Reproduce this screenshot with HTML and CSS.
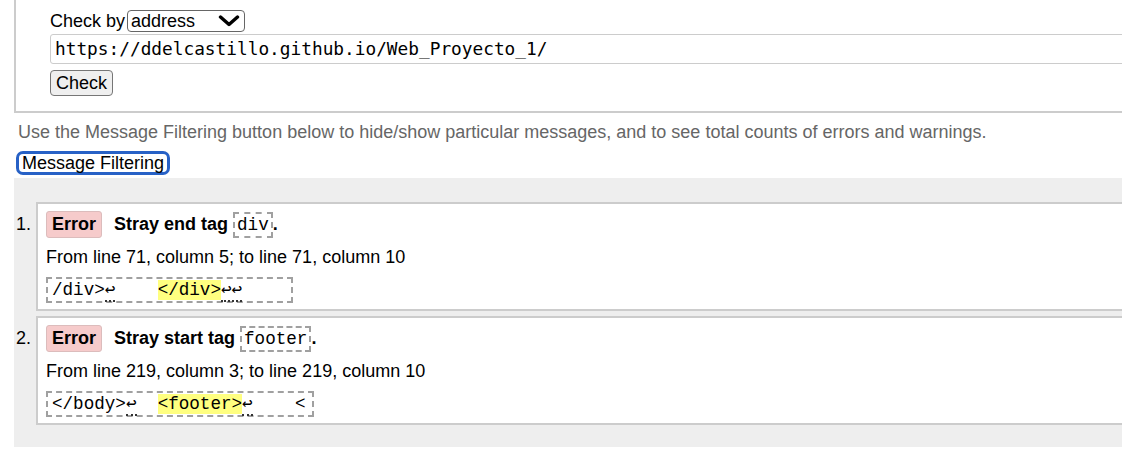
FILE: index.html
```html
<!DOCTYPE html>
<html lang="en">
<head>
<meta charset="utf-8">
<title>Nu Html Checker</title>
<link rel="stylesheet" href="styles.css">
</head>
<body>
<div class="page">
  <div class="form">
    <div class="row">
      <span class="label">Check by</span>
      <span class="select">address
        <svg class="chev" width="22" height="12" viewBox="0 0 22 12"><polyline points="2.5,2 11,9.5 19.5,2" fill="none" stroke="#000" stroke-width="3.4" stroke-linecap="round" stroke-linejoin="round"/></svg>
      </span>
    </div>
    <div class="url">https://ddelcastillo.github.io/Web_Proyecto_1/</div>
    <div class="btnrow"><button class="btn">Check</button></div>
  </div>
  <p class="hint">Use the Message Filtering button below to hide/show particular messages, and to see total counts of errors and warnings.</p>
  <div class="filterrow"><button class="filter">Message Filtering</button></div>
  <div class="results">
    <ol class="msgs">
      <li class="msg">
        <p class="head"><span class="badge">Error</span><strong>Stray end tag <code class="tag">div</code>.</strong></p>
        <p class="loc">From line 71, column 5; to line 71, column 10</p>
        <p class="ext"><code class="extract">/div&gt;<span class="lf">↩</span>    <b class="hl">&lt;/div&gt;</b><span class="lf">↩↩</span>    </code></p>
      </li>
      <li class="msg">
        <p class="head"><span class="badge">Error</span><strong>Stray start tag <code class="tag">footer</code>.</strong></p>
        <p class="loc">From line 219, column 3; to line 219, column 10</p>
        <p class="ext"><code class="extract">&lt;/body&gt;<span class="lf">↩</span>  <b class="hl">&lt;footer&gt;</b><span class="lf">↩</span>    &lt;</code></p>
      </li>
    </ol>
  </div>
</div>
</body>
</html>
```
FILE: styles.css
```css
html, body {
  margin: 0;
  padding: 0;
  overflow: hidden;
  background: #fff;
}
body {
  font-family: "Liberation Sans", Arial, sans-serif;
  font-size: 18px;
  color: #000;
}
.page {
  width: 1150px;
  padding-left: 14px;
}
.form {
  border: 2px solid #ccc;
  border-top: none;
  padding: 10px 0 15px 34px;
}
.row {
  display: flex;
  align-items: center;
  height: 22px;
}
.label {
  line-height: 22px;
  margin-right: 2px;
}
.select {
  box-sizing: border-box;
  width: 118px;
  height: 22px;
  border: 1px solid #666;
  border-radius: 4px;
  padding-left: 3px;
  display: flex;
  align-items: center;
  justify-content: space-between;
  line-height: 20px;
}
.chev {
  margin-right: 4px;
}
.url {
  margin-top: 2px;
  box-sizing: border-box;
  height: 30px;
  border: 1px solid #ccc;
  border-radius: 3px;
  padding-left: 4px;
  font-family: "DejaVu Sans Mono", monospace;
  font-size: 17.8px;
  line-height: 28px;
}
.btnrow {
  margin-top: 6px;
  display: flex;
}
.btn {
  font-family: "Liberation Sans", Arial, sans-serif;
  font-size: 18px;
  height: 26px;
  line-height: 22px;
  padding: 0 5px;
  border: 1px solid #767676;
  border-radius: 4px;
  background: #efefef;
  color: #000;
}
.hint {
  margin: 8px 0 0 4px;
  line-height: 22px;
  color: #666;
}
.filterrow {
  margin: 8px 0 0 2px;
  display: flex;
}
.filter {
  font-family: "Liberation Sans", Arial, sans-serif;
  font-size: 18px;
  line-height: 18px;
  padding: 0 3px;
  border: 3px solid #2761c6;
  border-radius: 7px;
  background: #fff;
  color: #000;
}
.results {
  margin-top: 3px;
  background: #eee;
}
.msgs {
  margin: 0;
  padding: 24px 0 22px 22px;
}
.msg {
  border: 2px solid #ccc;
  background: #fff;
  padding: 7px 8px 6px;
  margin-bottom: 5px;
}
.msg:last-child {
  margin-bottom: 0;
}
.msg::marker {
  font-size: 18px;
}
.msg p {
  margin: 0;
}
.head {
  line-height: 27px;
}
.badge {
  display: inline-block;
  line-height: 25px;
  padding: 0 5px;
  border: 1px solid #dcbcbc;
  border-radius: 3px;
  background: #f6cbcb;
  font-weight: bold;
  margin-right: 12px;
}
.tag {
  font-family: "Liberation Mono", "Courier New", monospace;
  font-size: 17.6px;
  font-weight: normal;
  border: 2px dashed #a0a0a0;
  padding: 1px 2px;
}
.loc {
  margin-top: 6px !important;
  line-height: 24px;
}
.ext {
  margin-top: 8px !important;
  line-height: 26px;
}
.extract {
  display: inline-block;
  vertical-align: top;
  font-family: "Liberation Mono", "Courier New", monospace;
  font-size: 17.6px;
  line-height: 22px;
  white-space: pre;
  border: 2px dashed #a0a0a0;
  padding: 0 7px 0 4px;
}
.hl {
  font-weight: normal;
  background: #ffff80;
}
.lf {
  border-bottom: 2px dotted #333;
}
```
